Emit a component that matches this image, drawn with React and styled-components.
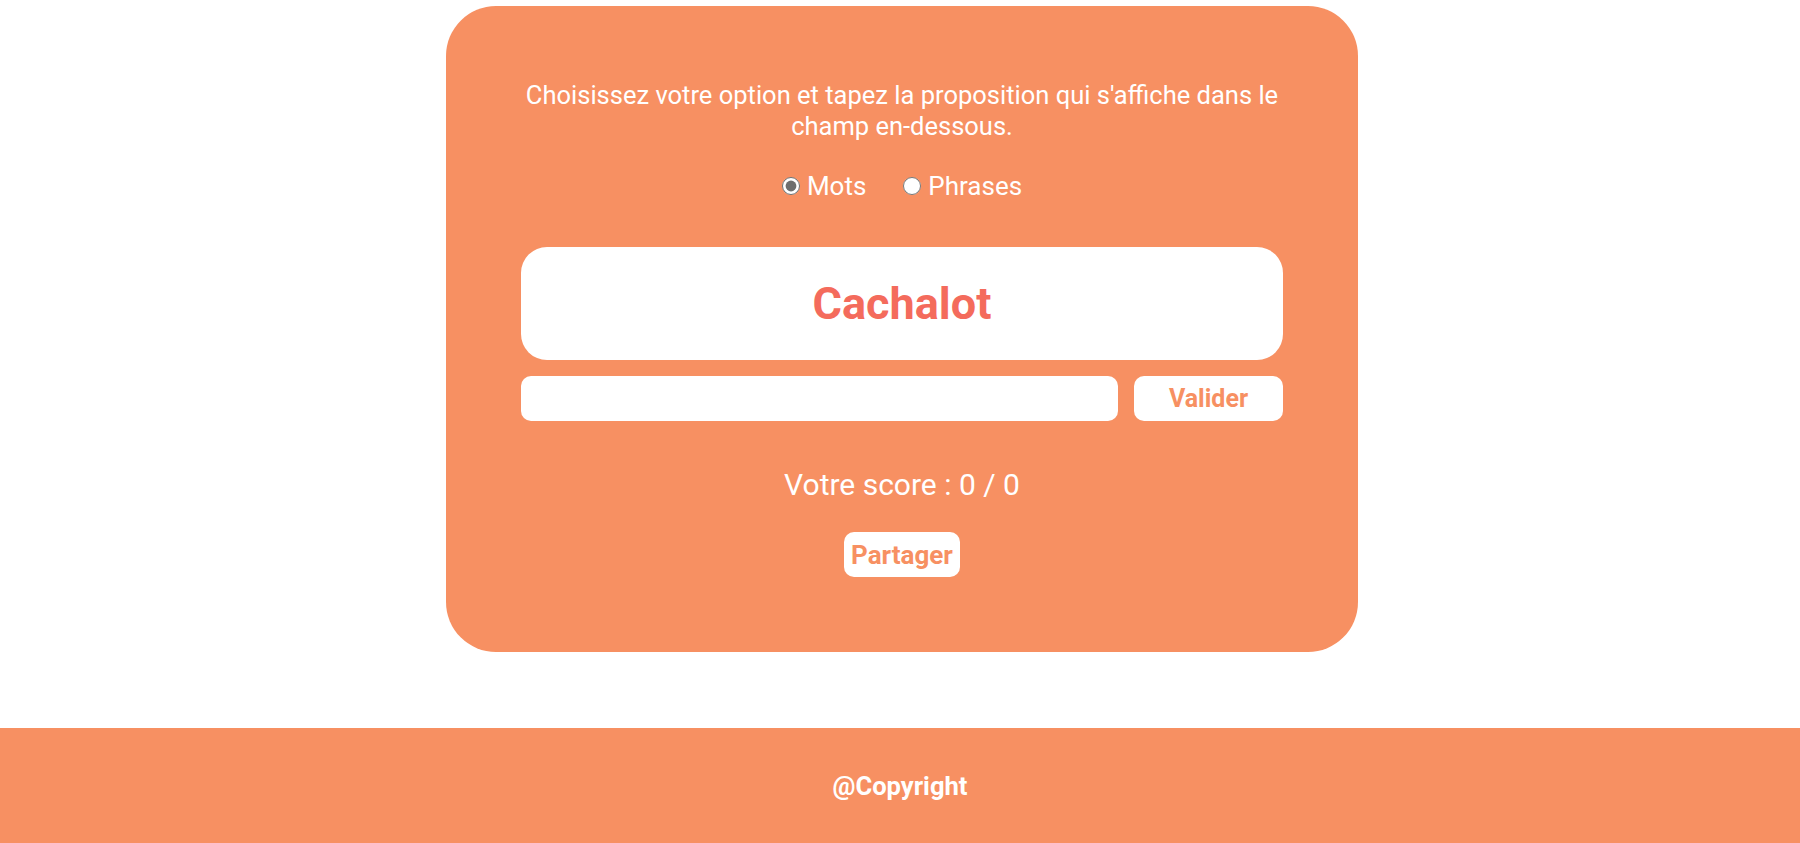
import React, { useState } from 'react';
import styled, { createGlobalStyle } from 'styled-components';

const GlobalStyle = createGlobalStyle`
  body {
    margin: 0;
    font-family: Roboto, "Liberation Sans", Arial, sans-serif;
    background: #fff;
  }
`;

const Page = styled.div`
  min-height: 843px;
  display: flex;
  flex-direction: column;
`;

const Main = styled.main`
  display: flex;
  justify-content: center;
  align-items: flex-start;
  padding: 6px 0 76px 4px;
`;

const Card = styled.section`
  width: 912px;
  box-sizing: border-box;
  background: #f79062;
  border-radius: 50px;
  padding: 74px 75px 75px;
  display: flex;
  flex-direction: column;
  align-items: center;
  color: #fff;
`;

const Intro = styled.p`
  margin: 0;
  font-size: 25.5px;
  line-height: 31px;
  text-align: center;
`;

const Options = styled.div`
  display: flex;
  gap: 37px;
  margin-top: 29px;
`;

const Option = styled.label`
  display: flex;
  align-items: center;
  gap: 7px;
  font-size: 26px;
  cursor: pointer;
`;

const Radio = styled.input`
  width: 18px;
  height: 18px;
  margin: 0;
  accent-color: #6e6e6e;
`;

const WordBox = styled.div`
  width: 100%;
  height: 113px;
  margin-top: 46px;
  background: #fff;
  border-radius: 26px;
  display: flex;
  align-items: center;
  justify-content: center;
  color: #f46b5c;
  font-size: 45px;
  font-weight: 700;
`;

const AnswerRow = styled.div`
  width: 100%;
  display: flex;
  gap: 16px;
  margin-top: 16px;
`;

const Input = styled.input`
  flex: 1;
  height: 45px;
  box-sizing: border-box;
  border: none;
  border-radius: 10px;
  padding: 0 12px;
  font-family: inherit;
  font-size: 20px;
  outline: none;
`;

const Button = styled.button`
  height: 45px;
  width: ${props => props.$width || 'auto'};
  padding: 0 7px;
  border: none;
  border-radius: 10px;
  background: #fff;
  color: #f79062;
  font-family: inherit;
  font-weight: 700;
  font-size: 25px;
  cursor: pointer;
`;

const Score = styled.p`
  margin: 46px 0 0;
  font-size: 30px;
`;

const ShareButton = styled(Button)`
  margin-top: 30px;
  font-size: 26px;
`;

const Footer = styled.footer`
  height: 116px;
  background: #f79062;
  color: #fff;
  display: flex;
  align-items: center;
  justify-content: center;
  font-size: 25.6px;
  font-weight: 700;
`;

const App = () => {
  const [mode, setMode] = useState('mots');
  const [answer, setAnswer] = useState('');

  return (
    <Page>
      <GlobalStyle />
      <Main>
        <Card>
          <Intro>
            Choisissez votre option et tapez la proposition qui s'affiche dans le champ en-dessous.
          </Intro>
          <Options>
            <Option>
              <Radio type="radio" name="mode" checked={mode === 'mots'} onChange={() => setMode('mots')} />
              Mots
            </Option>
            <Option>
              <Radio type="radio" name="mode" checked={mode === 'phrases'} onChange={() => setMode('phrases')} />
              Phrases
            </Option>
          </Options>
          <WordBox>Cachalot</WordBox>
          <AnswerRow>
            <Input value={answer} onChange={e => setAnswer(e.target.value)} />
            <Button $width="149px">Valider</Button>
          </AnswerRow>
          <Score>Votre score : 0 / 0</Score>
          <ShareButton>Partager</ShareButton>
        </Card>
      </Main>
      <Footer>@Copyright</Footer>
    </Page>
  );
};

export default App;
